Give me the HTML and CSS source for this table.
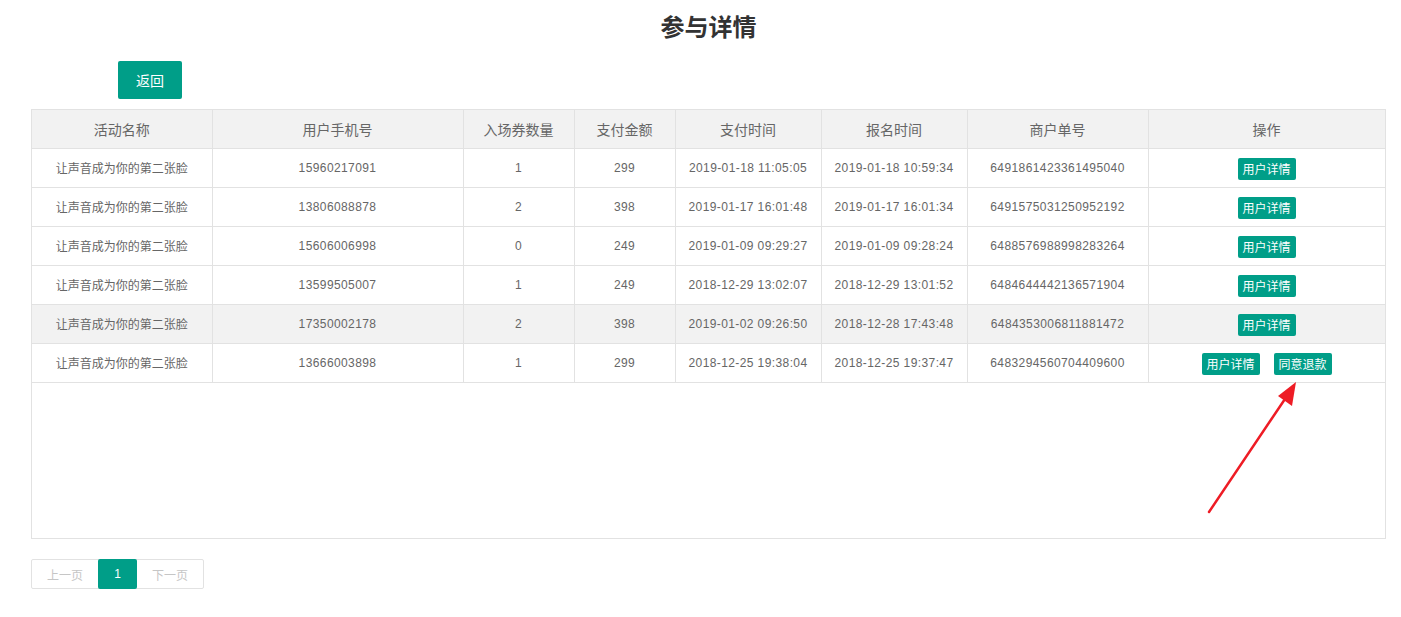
FILE: index.html
```html
<!DOCTYPE html>
<html lang="zh-CN">
<head>
<meta charset="utf-8">
<title>参与详情</title>
<link rel="stylesheet" href="styles.css">
</head>
<body>
<div class="page">
  <h1 class="title">参与详情</h1>
  <div class="toolbar"><button class="btn">返回</button></div>
  <div class="table-box">
    <table class="grid">
      <colgroup>
        <col style="width:180px"><col style="width:251px"><col style="width:111px"><col style="width:101px">
        <col style="width:146px"><col style="width:146px"><col style="width:181px"><col style="width:237px">
      </colgroup>
      <thead>
        <tr><th>活动名称</th><th>用户手机号</th><th>入场券数量</th><th>支付金额</th><th>支付时间</th><th>报名时间</th><th>商户单号</th><th>操作</th></tr>
      </thead>
      <tbody>
        <tr><td>让声音成为你的第二张脸</td><td class="num">15960217091</td><td class="num">1</td><td class="num">299</td><td class="num">2019-01-18 11:05:05</td><td class="num">2019-01-18 10:59:34</td><td class="num">6491861423361495040</td><td><span class="mini">用户详情</span></td></tr>
        <tr><td>让声音成为你的第二张脸</td><td class="num">13806088878</td><td class="num">2</td><td class="num">398</td><td class="num">2019-01-17 16:01:48</td><td class="num">2019-01-17 16:01:34</td><td class="num">6491575031250952192</td><td><span class="mini">用户详情</span></td></tr>
        <tr><td>让声音成为你的第二张脸</td><td class="num">15606006998</td><td class="num">0</td><td class="num">249</td><td class="num">2019-01-09 09:29:27</td><td class="num">2019-01-09 09:28:24</td><td class="num">6488576988998283264</td><td><span class="mini">用户详情</span></td></tr>
        <tr><td>让声音成为你的第二张脸</td><td class="num">13599505007</td><td class="num">1</td><td class="num">249</td><td class="num">2018-12-29 13:02:07</td><td class="num">2018-12-29 13:01:52</td><td class="num">6484644442136571904</td><td><span class="mini">用户详情</span></td></tr>
        <tr class="hover"><td>让声音成为你的第二张脸</td><td class="num">17350002178</td><td class="num">2</td><td class="num">398</td><td class="num">2019-01-02 09:26:50</td><td class="num">2018-12-28 17:43:48</td><td class="num">6484353006811881472</td><td><span class="mini">用户详情</span></td></tr>
        <tr><td>让声音成为你的第二张脸</td><td class="num">13666003898</td><td class="num">1</td><td class="num">299</td><td class="num">2018-12-25 19:38:04</td><td class="num">2018-12-25 19:37:47</td><td class="num">6483294560704409600</td><td><span class="ops"><span class="mini">用户详情</span><span class="mini">同意退款</span></span></td></tr>
      </tbody>
    </table>
  </div>
  <div class="pager">
    <span class="pg disabled prev">上一页</span><span class="pg current">1</span><span class="pg disabled next">下一页</span>
  </div>
</div>
<svg class="arrow" width="120" height="150" viewBox="0 0 120 150">
  <line x1="24" y1="140" x2="102" y2="24" stroke="#ee1c25" stroke-width="2.5" stroke-linecap="round"/>
  <polygon points="111,10 107,34 93,24" fill="#ee1c25"/>
</svg>
</body>
</html>
```

FILE: styles.css
```css
html, body {
  margin: 0;
  padding: 0;
  background: #fff;
}
body {
  font-family: "Liberation Sans", Arial, "Noto Sans CJK SC", sans-serif;
  color: #666;
  position: relative;
  width: 1401px;
  height: 617px;
  overflow: hidden;
}
.page {
  padding: 0 15px 0 31px;
}
.title {
  margin: 0;
  padding-top: 8px;
  font-family: "Noto Sans CJK SC", sans-serif;
  font-size: 24px;
  line-height: 36px;
  font-weight: 700;
  color: #333;
  text-align: center;
}
.toolbar {
  margin-top: 17px;
  padding-left: 87px;
  height: 38px;
}
.btn {
  display: block;
  width: 64px;
  height: 38px;
  border: 0;
  border-radius: 2px;
  background: #009e88;
  color: #fff;
  font-family: "Noto Sans CJK SC", sans-serif;
  font-size: 14px;
  padding: 0;
}
.table-box {
  margin-top: 10px;
  height: 428px;
  border: 1px solid #e2e2e2;
}
.grid {
  border-collapse: collapse;
  table-layout: fixed;
  width: 1353px;
}
.grid th, .grid td {
  border: 1px solid #e2e2e2;
  height: 39px;
  padding: 0 5px;
  text-align: center;
  box-sizing: border-box;
  white-space: nowrap;
}
.grid th { height: 38px; }
.grid tr:first-child th { border-top: 0; }
.grid th:first-child, .grid td:first-child { border-left: 0; }
.grid th {
  background: #f2f2f2;
  font-family: "Noto Sans CJK SC", sans-serif;
  font-weight: 400;
  font-size: 14px;
  color: #666;
}
.grid td {
  font-family: "Noto Sans CJK SC", sans-serif;
  font-size: 12px;
  color: #666;
}
.grid td.num {
  font-family: "Liberation Sans", Arial, sans-serif;
  letter-spacing: 0.4px;
}
.grid tr.hover td { background: #f2f2f2; }
.mini {
  display: inline-block;
  width: 58px;
  height: 22px;
  line-height: 22px;
  margin-top: 3px;
  background: #009e88;
  color: #fff;
  border-radius: 2px;
  font-size: 12px;
  font-family: "Noto Sans CJK SC", sans-serif;
  vertical-align: middle;
}
.ops {
  display: inline-flex;
  gap: 14px;
}
.pager {
  margin-top: 20px;
  display: inline-flex;
  border: 1px solid #e2e2e2;
  border-radius: 2px;
  height: 28px;
}
.pg {
  display: flex;
  align-items: center;
  justify-content: center;
  font-size: 12px;
  font-family: "Noto Sans CJK SC", sans-serif;
  height: 28px;
}
.pg.disabled { color: #c6c6c6; }
.pg.prev { width: 66px; }
.pg.next { width: 66px; }
.pg.current {
  width: 39px;
  background: #009e88;
  color: #fff;
  margin: -1px 0;
  height: 30px;
  border-radius: 2px;
  font-family: "Liberation Sans", Arial, sans-serif;
}
.arrow {
  position: absolute;
  left: 1185px;
  top: 372px;
}
```
